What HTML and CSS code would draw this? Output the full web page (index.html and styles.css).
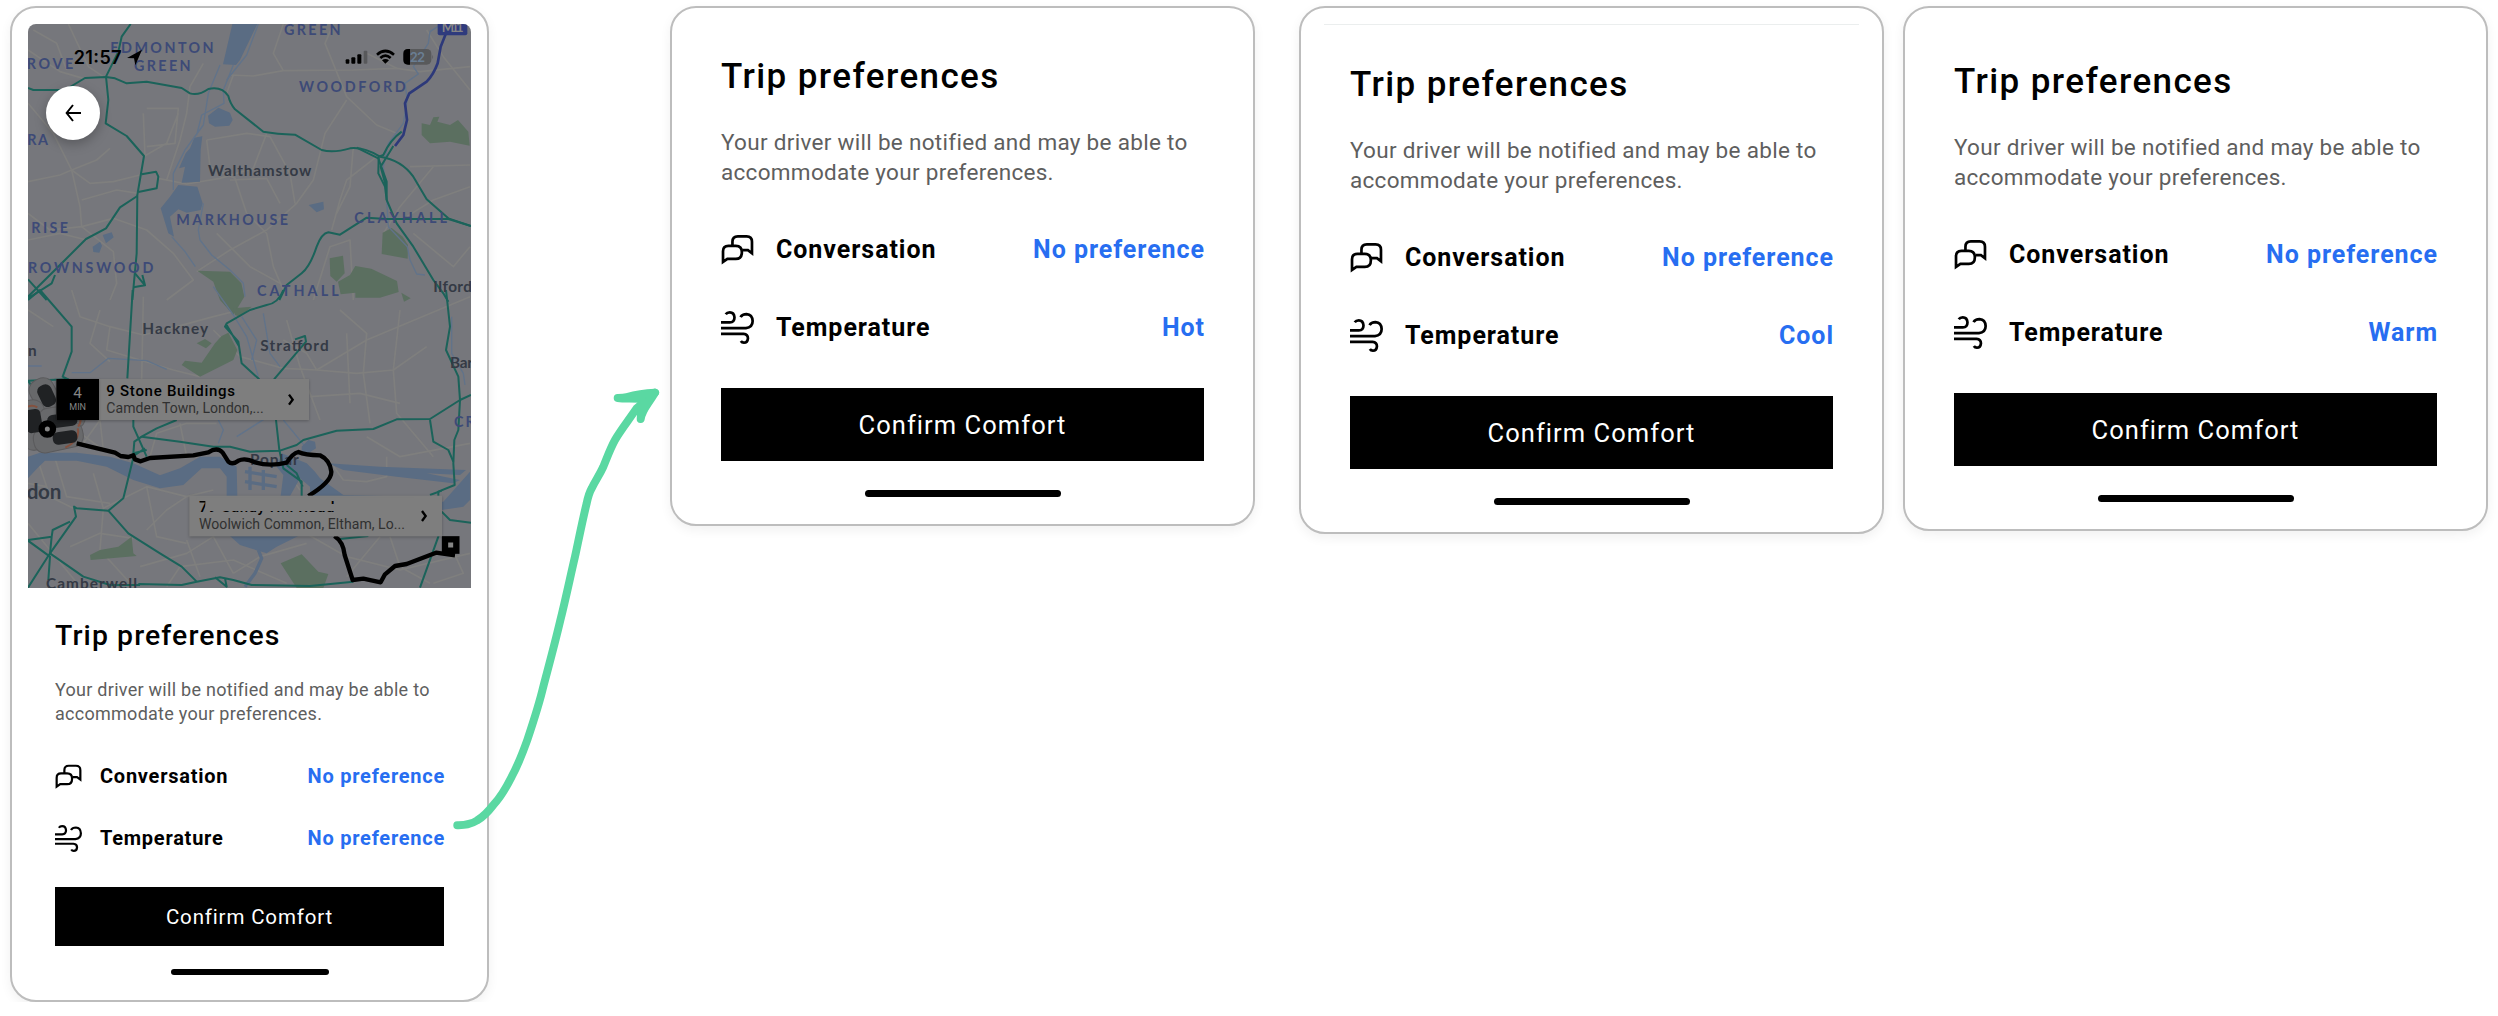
FILE: index.html
```html
<!DOCTYPE html>
<html lang="en">
<head>
  <meta charset="UTF-8">
  <meta name="viewport" content="width=device-width, initial-scale=1.0">
  <title>Trip preferences</title>
  <link rel="stylesheet" href="styles.css">
</head>
<body>
  <!-- shared icons -->
  <svg class="sprite">
    <symbol id="chat" viewBox="66 40 98 98">
      <path d="M72 126V94Q72 78 88 78H110Q128 78 128 97Q128 117 110 117H85Z"/>
      <path d="M100 77V66Q100 50 116 50H142Q158 50 158 66V100L146 91H130"/>
    </symbol>
    <symbol id="wind" viewBox="66 272 98 98">
      <path d="M66 306H92Q106 305 106 291Q105 276 92 276Q84 276 80 282"/>
      <path d="M66 323H140Q160 321 160 302Q159 282 142 281Q129 281 124 290"/>
      <path d="M66 340H133Q146 341 146 353Q145 366 134 366Q128 366 125 361"/>
    </symbol>
  </svg>

  <main>
    <section class="card phone">
      <div class="map">
        <svg viewBox="84 72 1329 1692" width="443" height="564">
          <rect class="land" x="84" y="72" width="1329" height="1692"/>

          <g class="roads">
            <path d="M84 150L180 215L250 235M100 90L170 130L200 210M205 72L265 200L310 230M84 310L160 400L215 510L240 620L245 680"/>
            <path d="M84 545L180 525L215 510L290 480L330 445M215 510L270 550L340 545L420 525M245 600L350 570L415 580"/>
            <path d="M610 190L570 260L560 340L540 420L500 540M440 325H535L525 430L440 440M430 470L500 430L535 340M700 225L680 280M430 340L435 470"/>
            <path d="M690 225L760 228L850 212L1060 210L1190 205L1260 215L1410 200M850 72L820 160L850 212M1000 72L975 130L1040 290L1130 375L1190 400"/>
            <path d="M1040 300L975 400L960 460L940 540L890 610L800 690M1280 90L1330 170L1410 270M1100 160L1190 205M620 420L740 400L810 410L870 520L885 610"/>
            <path d="M620 420L630 500L705 535L740 640M690 540L800 535L840 610M475 535L560 552L660 535L760 505L800 400M1130 470L1040 540L1020 600L995 690M1060 440L1050 560L1010 640"/>
            <path d="M84 640L150 690L245 680L340 655L440 690L520 760L580 840L500 900M245 680L340 755L350 850L330 900M84 720L180 700L260 720M740 640L800 700L820 800L850 870M800 690L690 750L590 815"/>
            <path d="M1230 500L1410 495M1300 500L1200 620L1150 700M1410 560L1300 600L1220 650M1240 700L1360 800L1410 740M940 900L990 740L1050 720L1060 900M650 700L750 800L840 850"/>
          </g>
          <g class="roads" transform="translate(0 870)">
            <path d="M215 0L240 80L330 110L430 135L530 110L640 80L720 60M300 60L270 160L330 215M430 20L425 270M84 60L160 110M330 110L320 180L420 210L520 240L600 260"/>
            <path d="M640 120L720 200L850 235L950 240L1100 150L1410 20M950 240L920 190L850 150M860 90L900 230L960 390M1020 60L1100 130L1090 250L1110 400M1200 60L1180 240L1190 370L1300 500"/>
            <path d="M950 240L1070 250L1180 240L1280 170M1040 130L1050 340M300 390L310 480L200 400M250 460L300 390L400 350M450 500L470 430L560 400L650 400M540 400L560 500L600 500M930 320L1080 310L1200 340"/>
            <path d="M110 500L150 620L220 655M165 505L200 620L330 640M280 550L310 655L440 590L560 620L640 600M310 655L300 780L400 890M440 590L470 740L560 760M440 720L500 660L560 620M210 770L300 730L400 745"/>
            <path d="M420 830L560 790L640 740L700 850M560 750L600 860M700 850L780 800L920 760M850 530L900 600M980 500L1030 570L1100 575L1160 560L1160 500M1100 440L1200 500L1410 460M900 720L1040 800L1200 840L1410 790"/>
            <path d="M1170 740L1200 830L1290 880M1040 860L1140 740M1340 740L1390 850L1300 880M84 580L140 590M84 700L150 780L240 890M500 890L540 830L700 810L860 880"/>
          </g>

          <g class="parks">
            <path d="M1265 370L1290 375L1300 352L1318 350L1312 365L1350 375L1374 360L1405 395L1409 437L1350 425L1290 430L1265 405Z"/>
            <path d="M1148 698L1175 684L1208 710L1224 735L1223 776L1145 762Z"/>
            <path d="M989 775L1029 767L1034 820L1010 845L991 828Z"/>
            <path d="M1014 845L1050 825L1066 798L1114 806L1191 843L1196 876L1140 893H1066V878L1022 883Z"/>
            <path d="M1204 878L1232 895L1212 905Z"/>
            <path d="M592 812L690 815L724 850L733 890L700 945L660 900L640 845Z"/>
            <path d="M700 925L755 920L720 950L705 945Z"/>
            <path d="M665 1008L685 998L712 1050L700 1080L600 1130L545 1095L555 1082L605 1088L645 1030Z"/>
            <path d="M590 1030L615 1017L635 1030L618 1045Z"/>
            <path d="M270 1665L300 1650L355 1640L395 1610L400 1660L410 1668L272 1680Z"/>
            <path d="M842 1690L905 1663L955 1715L985 1722L970 1764H890Z"/>
          </g>

          <g class="water">
            <path d="M697 72H772L720 180L708 195L669 193Z"/>
            <path d="M624 347L655 323L690 338L698 360L688 377L645 380L627 370Z"/>
            <path d="M583 413L607 409L602 450L600 545L545 548L555 500L537 505L557 460L570 445Z"/>
            <path d="M535 555L592 560L608 610L602 630L560 638L535 628L510 650L522 710L505 700L482 625L510 590Z"/>
            <path d="M926 615L970 605L972 628L950 637Z"/>
            <path d="M308 705L335 697L341 712L318 730ZM278 740L300 725L306 737L298 758L280 756Z"/>
          </g>
          <g class="streams">
            <path d="M660 195L625 280L610 375L555 450L520 520V570M700 195L670 270L672 310L605 345L590 405"/>
            <path d="M515 710L555 755L586 800M610 610L595 690L600 720L635 765L690 810L730 850L735 890M775 72L740 165L680 240"/>
            <path d="M1325 72L1290 95L1285 130L1240 200L1255 222L1215 250L1222 300L1210 370L1165 430L1150 500L1160 600L1165 680L1222 740L1230 780L1250 822L1275 825"/>
            <path d="M640 860L700 945L740 1010L775 1130M725 950L770 1020L755 1080M790 940L810 1060L840 1100M1355 950V1060L1390 1120L1395 1155M270 1118L325 1075L440 1082L500 1108"/>
            <path d="M215 1118L270 1118M84 1098H125M655 1260L670 1290L655 1330M820 1240L710 1310M850 1260L920 1345"/>
          </g>

          <!-- thames -->
          <g class="water" transform="translate(0 870)">
            <path d="M84 500L120 488L230 488L330 500L400 520L480 556L540 535L600 500L660 500L710 530L712 618H680V560L660 535H605L550 585L480 595L400 570L320 530L230 512H135L112 535L84 565Z"/>
            <path d="M842 618L850 555L830 530L845 490L920 520L945 545L960 565L1030 615L1150 618L1330 635L1410 545V630L1390 650L1325 660V618ZM870 618H930V590L900 565Z" fill-rule="evenodd"/>
            <path d="M985 520L1140 530L1398 540L1380 555L1280 550L1380 570L1360 580L1190 560L1030 540Z"/>
            <path d="M690 738H895L830 770L800 790L720 765Z"/>
            <path d="M905 470L925 450L945 455L948 475L925 490L905 488Z"/>
          </g>
          <g class="streams thick" transform="translate(0 870)">
            <path d="M735 545L830 560M735 575L830 590M750 530V600M790 540V600M775 780L785 805L765 850L735 890"/>
          </g>

          <g class="highways">
            <path d="M392 72L365 110L355 155L318 230L325 300L317 370L380 408L432 468L412 585L410 760L397 900"/>
            <path d="M84 264L100 270H195L255 234L318 231L345 235L380 250L440 245L545 264L570 280Q595 288 625 267Q665 258 685 288Q690 310 705 328L790 395Q830 402 885 404L965 450Q1000 460 1050 445Q1090 440 1140 470Q1205 480 1240 530L1280 598L1345 655L1413 678"/>
            <path d="M425 523L468 515L475 530L470 565L415 576M412 588L360 622L318 685L258 717L195 780L84 890M84 838L140 900M84 895L155 850L165 825"/>
            <path d="M1413 678L1345 657H1160L1100 653L1020 704L985 697Q965 700 950 740Q930 800 905 820L860 855L838 900"/>
            <path d="M1205 395Q1170 420 1150 465L1136 470L1135 520L1155 560L1160 600L1190 670L1240 740L1300 840L1330 880L1345 905"/>
            <path d="M1070 443L1135 475L1160 545V600M1180 438L1142 500L1158 560M405 820L435 856L400 862M427 825L435 856"/>
          </g>
          <g class="highways" transform="translate(0 870)">
            <path d="M398 0L382 265M84 30L120 0L215 110V185L188 260L205 268L84 272L100 295L140 275"/>
            <path d="M850 0Q835 40 800 45L750 60L680 100L675 110L715 155L725 220L778 268M680 105L718 170M822 268L918 155L915 138L885 148"/>
            <path d="M1338 0L1350 110L1338 180L1375 260L1380 330L1375 420L1363 450L1360 520L1364 585L1315 605V740L1260 893"/>
            <path d="M1413 315L1380 330L1290 387L1190 388L1120 417L1010 422L910 450L890 465L840 482L750 485L690 470L640 470L540 455L425 440L470 415L530 390"/>
            <path d="M828 390L838 480L850 535L905 575V618M860 525L890 550L908 590M1290 390L1300 455L1345 480L1360 515M400 390V410L440 500M425 440L403 455L400 490L440 480M405 495L435 475M402 495L370 625L325 662L230 655L222 650L228 680L150 790L84 893"/>
            <path d="M325 662L385 730L480 790L545 830L590 875L545 885L415 882M84 750L155 740L150 790L250 860L330 885H420M155 740L158 720L210 695M84 752L150 800L145 870M590 875L660 862L700 870L755 885L930 888L1060 875M645 862L680 890L675 865"/>
            <path d="M1325 665L1350 690L1413 698M1020 747L1105 738M1290 615L1325 602"/>
          </g>
          <path class="motorway" d="M1338 100L1322 140L1313 190Q1300 225 1280 245L1228 280L1215 310L1221 360L1210 405L1185 438"/>

          <g class="districts">
            <text x="852" y="104" textLength="170">GREEN</text>
            <text x="331" y="160" textLength="310">EDMONTON</text>
            <text x="402" y="213" textLength="170">GREEN</text>
            <text x="80" y="206" textLength="140">ROVE</text>
            <text x="897" y="277" textLength="320">WOODFORD</text>
            <text x="82" y="434" textLength="62">RA</text>
            <text x="94" y="699" textLength="110">RISE</text>
            <text x="529" y="676" textLength="335">MARKHOUSE</text>
            <text x="1063" y="668" textLength="278">CLAYHALL</text>
            <text x="84" y="820" textLength="376">ROWNSWOOD</text>
            <text x="771" y="887" textLength="245">CATHALL</text>
            <text x="1362" y="1281" textLength="62">CR</text>
          </g>
          <g class="towns">
            <text x="624" y="528" textLength="310">Walthamstow</text>
            <text x="1300" y="876" textLength="116">Ilford</text>
            <text x="427" y="1002" textLength="197">Hackney</text>
            <text x="781" y="1053" textLength="205">Stratford</text>
            <text x="84" y="1069">n</text>
            <text x="1350" y="1104" textLength="104">Barki</text>
            <text x="750" y="1396" textLength="146">Poplar</text>
            <text x="138" y="1767" textLength="273">Camberwell</text>
            <text class="city" x="80" y="1497" textLength="104">don</text>
          </g>

          <!-- cars waiting around the pickup point -->
          <g class="cars">
            <rect x="-70" y="-35" width="140" height="76" rx="32" transform="translate(145 1200) rotate(62)"/>
            <rect x="-75" y="-42" width="150" height="84" rx="34" transform="translate(100 1275) rotate(78)"/>
            <rect x="-70" y="-36" width="140" height="72" rx="30" transform="translate(185 1255) rotate(-8)"/>
            <rect x="-75" y="-38" width="150" height="76" rx="32" transform="translate(175 1312) rotate(-12)"/>
          </g>
          <path class="lights" d="M84 1220Q98 1214 112 1222M242 1252Q243 1270 234 1280M233 1285Q242 1320 196 1343"/>
          <g class="glass">
            <rect x="-34" y="-22" width="68" height="44" rx="18" transform="translate(140 1187) rotate(65)"/>
            <rect x="-42" y="-24" width="70" height="48" rx="14" transform="translate(102 1270) rotate(80)"/>
            <rect x="-38" y="-20" width="90" height="40" rx="16" transform="translate(180 1262) rotate(-7)"/>
            <rect x="-35" y="-18" width="74" height="38" rx="16" transform="translate(193 1312) rotate(-8)"/>
          </g>

          <path class="route" d="M230 1330L345 1358L362 1368L385 1371L400 1366L405 1378L422 1384L450 1374L580 1366L625 1357Q652 1340 668 1358L685 1385Q697 1396 715 1382Q735 1372 765 1387Q810 1400 860 1388Q878 1360 895 1356Q915 1365 960 1366Q990 1380 994 1415Q995 1445 925 1488M1003 1608Q1030 1625 1034 1665L1058 1740L1090 1736L1142 1747L1155 1723L1185 1698L1220 1692L1308 1658L1365 1666"/>
          <circle cx="142" cy="1287" r="17" class="pin"/>
          <rect x="1335" y="1618" width="34" height="34" class="pin square"/>

          <g class="tag">
            <rect x="169" y="1137" width="758" height="123"/>
            <rect class="eta" x="169" y="1137" width="128" height="123"/>
            <text class="mins" x="233" y="1195">4</text>
            <text class="unit" x="208" y="1230" textLength="50">MIN</text>
            <text class="place" x="319" y="1188" textLength="386">9 Stone Buildings</text>
            <text class="area" x="319" y="1239" textLength="472">Camden Town, London,...</text>
            <path d="M867 1184L878 1199L867 1214"/>
          </g>
          <g class="tag">
            <rect x="568" y="1487" width="758" height="122"/>
            <text class="place" x="597" y="1537" textLength="406">79 Sandy Hill Road</text>
            <path class="cover" d="M590 1492H1240V1503H590ZM616 1500H992V1512H1010V1533H616Z"/>
            <text class="area" x="597" y="1587" textLength="618">Woolwich Common, Eltham, Lo...</text>
            <path d="M1266 1533L1277 1548L1266 1563"/>
          </g>

          <g class="m11">
            <rect x="1313" y="58" width="89" height="48" rx="6"/>
            <text x="1325" y="97" textLength="66">M11</text>
          </g>

          <!-- status bar -->
          <text class="time" x="221" y="191" textLength="144">21:57</text>
          <path d="M426 149L381 174L402 175L406 196Z"/>
          <rect x="1037" y="178" width="11" height="13" rx="3"/>
          <rect x="1054" y="172" width="12" height="19" rx="3"/>
          <rect x="1072" y="163" width="12" height="28" rx="3"/>
          <rect x="1091" y="152" width="11" height="39" rx="3" class="off"/>
          <path class="wifi" d="M1131 164Q1156 142 1182 164M1141 174Q1156 160 1172 174"/>
          <path d="M1156 191L1146 181Q1156 173 1167 181Z"/>
          <rect x="1210" y="147" width="84" height="47" rx="14" class="off"/>
          <path d="M1230 147H1224Q1210 147 1210 161V180Q1210 194 1224 194H1230Z"/>
          <path d="M1297 164Q1302 171 1297 178Z" class="off"/>
          <text class="charge" x="1229" y="186" textLength="46">22</text>
        </svg>
        <button type="button" class="back">
          <svg viewBox="0 0 48 54" width="16" height="18"><path d="M48 27H4M24 3L5 27L24 51"/></svg>
        </button>
      </div>
      <div class="sheet">
        <h2>Trip preferences</h2>
        <p class="note">Your driver will be notified and may be able to<br>accommodate your preferences.</p>
        <div class="row">
          <svg class="icon"><use href="#chat"/></svg>
          <span class="label">Conversation</span>
          <span class="value">No preference</span>
        </div>
        <div class="row">
          <svg class="icon"><use href="#wind"/></svg>
          <span class="label">Temperature</span>
          <span class="value">No preference</span>
        </div>
        <button type="button" class="confirm">Confirm Comfort</button>
        <div class="home"></div>
      </div>
    </section>

    <section class="card large hot">
      <div class="sheet">
        <h2>Trip preferences</h2>
        <p class="note">Your driver will be notified and may be able to<br>accommodate your preferences.</p>
        <div class="row">
          <svg class="icon"><use href="#chat"/></svg>
          <span class="label">Conversation</span>
          <span class="value">No preference</span>
        </div>
        <div class="row">
          <svg class="icon"><use href="#wind"/></svg>
          <span class="label">Temperature</span>
          <span class="value">Hot</span>
        </div>
        <button type="button" class="confirm">Confirm Comfort</button>
        <div class="home"></div>
      </div>
    </section>

    <section class="card large cool">
      <div class="sheet">
        <h2>Trip preferences</h2>
        <p class="note">Your driver will be notified and may be able to<br>accommodate your preferences.</p>
        <div class="row">
          <svg class="icon"><use href="#chat"/></svg>
          <span class="label">Conversation</span>
          <span class="value">No preference</span>
        </div>
        <div class="row">
          <svg class="icon"><use href="#wind"/></svg>
          <span class="label">Temperature</span>
          <span class="value">Cool</span>
        </div>
        <button type="button" class="confirm">Confirm Comfort</button>
        <div class="home"></div>
      </div>
    </section>

    <section class="card large warm">
      <div class="sheet">
        <h2>Trip preferences</h2>
        <p class="note">Your driver will be notified and may be able to<br>accommodate your preferences.</p>
        <div class="row">
          <svg class="icon"><use href="#chat"/></svg>
          <span class="label">Conversation</span>
          <span class="value">No preference</span>
        </div>
        <div class="row">
          <svg class="icon"><use href="#wind"/></svg>
          <span class="label">Temperature</span>
          <span class="value">Warm</span>
        </div>
        <button type="button" class="confirm">Confirm Comfort</button>
        <div class="home"></div>
      </div>
    </section>

    <!-- arrow from the phone to the first result -->
    <svg class="arrow" viewBox="0 0 220 460" width="220" height="460">
      <path d="M7.300 445.300C14 445 20 445 27 440.500C33 437 38 432 43.300 425C50 418 56 408 61.700 396.700C68 385 73 372 77.300 360C83 343 89 325 93.300 306.700C99 285 105 263 110 241.700C116 218 120 198 125 176.700C129 158 133 138 136.700 123.300C138 117 139 113 141.700 108.300C145 101 149 96 153.300 86.700C157 78 160 69 165 60C170 51 178 41 186.700 28.300L205 12.700"/>
      <path class="head" d="M190.700 39C192 30 197 26 205 12.700C198 13 184 15 177 17C174 18 170 18 167.700 18C175 19 183 18 192 19Z"/>
    </svg>
  </main>
</body>
</html>
```

FILE: styles.css
```css
*{
  padding:0;
  margin:0;
  box-sizing: border-box;
}
body{
  background-color: white;
  font-family: Roboto, "Liberation Sans", sans-serif;
  overflow: hidden;
}
main{
  position: relative;
  display: flex;
  align-items: flex-start;
  padding: 6px 0 0 10px;
}
.sprite{
  display: none;
}
.card{
  flex: none;
  background-color: white;
  border: 2px solid #bdbdbd;
  border-radius: 26px;
  box-shadow: 0 4px 12px rgba(0,0,0,0.06);
}
.phone{
  width: 479px;
  height: 996px;
  padding: 16px;
}
.large{
  width: 585px;
}
.hot{
  height: 520px;
  padding: 47px 49px 0 49px;
  margin-left: 181px;
}
.cool{
  position: relative;
  height: 528px;
  padding: 55px 49px 0 49px;
  margin-left: 44px;
}
.cool::before{
  content: '';
  position: absolute;
  top: 16px;
  left: 23px;
  right: 23px;
  height: 1px;
  background-color: #ebeeee;
}
.warm{
  height: 525px;
  padding: 52px 49px 0 49px;
  margin-left: 19px;
}

/* map */
.map{
  position: relative;
  height: 564px;
  border-radius: 8px 8px 0 0;
  overflow: hidden;
}
.map svg{
  display: block;
}
.land{
  fill: #76777c;
}
.roads, .highways, .streams, .motorway, .route, .lights, .wifi{
  fill: none;
  stroke-linejoin: round;
}
.roads{
  stroke: #7f7f7e;
  stroke-width: 5;
}
.parks{
  fill: #5b6f60;
}
.water{
  fill: #5a6c83;
}
.streams{
  stroke: #61738a;
  stroke-width: 4;
}
.thick{
  stroke: #5a6c83;
  stroke-width: 10;
}
.highways{
  stroke: #1b635a;
  stroke-width: 6;
}
.motorway{
  stroke: #2d397a;
  stroke-width: 8;
}
.map text{
  font-family: Lato, "Open Sans", sans-serif;
}
.districts text{
  font-size: 43px;
  font-weight: 700;
  fill: #3d4a77;
}
.towns text{
  font-size: 46px;
  font-weight: 700;
  fill: #343a45;
}
.towns .city{
  font-size: 62px;
}
.cars{
  fill: #68696b;
  stroke: #5a5a5c;
  stroke-width: 3;
}
.glass{
  fill: #202224;
}
.lights{
  stroke: #84513f;
  stroke-width: 6;
}
.route{
  stroke: black;
  stroke-width: 13;
}
.pin{
  fill: #858585;
  stroke: black;
  stroke-width: 19;
}
.tag rect{
  fill: #7e7e7e;
  filter: drop-shadow(0 3px 5px rgba(0,0,0,0.25));
}
.tag .eta{
  fill: black;
}
.tag path{
  fill: none;
  stroke: black;
  stroke-width: 7;
}
.tag .cover{
  fill: #7e7e7e;
  stroke: none;
}
.map .tag text{
  font-family: Roboto, sans-serif;
}
.mins, .unit{
  fill: #858585;
}
.mins{
  font-size: 46px;
  text-anchor: middle;
}
.unit{
  font-size: 27px;
}
.place{
  font-size: 45px;
  font-weight: 500;
}
.area{
  font-size: 42px;
  fill: #303030;
}
.m11 rect{
  fill: #2f3b7d;
}
.m11 text{
  font-size: 39px;
  font-weight: 700;
  fill: #858585;
}
.map .time, .map .charge{
  font-family: Inter, sans-serif;
  font-size: 54px;
  font-weight: 600;
}
.map .charge{
  font-size: 39px;
  fill: #6a7e93;
}
.off{
  fill: #4f4f50;
  fill-opacity: 0.75;
}
.wifi{
  stroke: black;
  stroke-width: 8;
}
.back{
  position: absolute;
  top: 62px;
  left: 18px;
  width: 54px;
  height: 54px;
  display: flex;
  align-items: center;
  justify-content: center;
  border: none;
  border-radius: 50%;
  background-color: white;
  box-shadow: 0 4px 12px rgba(0,0,0,0.25);
}
.back svg{
  flex: none;
  fill: none;
  stroke: black;
  stroke-width: 6;
}

/* preferences sheet */
.phone .sheet{
  padding: 30px 27px 0 27px;
}
h2{
  font-size: 28.4px;
  line-height: 36px;
  font-weight: 500;
  letter-spacing: 1.1px;
  white-space: nowrap;
}
.note{
  margin: 24px 0 35px 0;
  font-size: 18px;
  line-height: 24px;
  letter-spacing: 0.27px;
  color: #5e5e5e;
  white-space: nowrap;
}
.row{
  display: flex;
  align-items: center;
  height: 30px;
  margin-bottom: 32px;
  font-size: 20px;
  font-weight: 700;
  letter-spacing: 0.75px;
}
.icon{
  width: 27px;
  height: 27px;
  margin-right: 18px;
  fill: none;
  stroke: black;
  stroke-width: 8;
}
.value{
  margin-left: auto;
  margin-right: -1px;
  color: #276ef1;
}
.confirm{
  display: block;
  width: 100%;
  height: 59px;
  margin-top: 34px;
  border: none;
  background-color: black;
  color: white;
  font-family: inherit;
  font-size: 20.5px;
  font-weight: 400;
  letter-spacing: 0.85px;
}
.home{
  width: 158px;
  height: 6px;
  margin: 23px auto 0 auto;
  border-radius: 3px;
  background-color: black;
}
.large h2{
  font-size: 35px;
  line-height: 44px;
  letter-spacing: 1.4px;
}
.large .note{
  margin: 28px 0 44px 0;
  font-size: 22.5px;
  line-height: 30px;
  letter-spacing: 0.3px;
}
.large .row{
  height: 36px;
  margin-bottom: 42px;
  font-size: 25px;
  letter-spacing: 0.95px;
}
.large .icon{
  width: 33px;
  height: 33px;
  margin-right: 22px;
}
.large .confirm{
  height: 73px;
  margin-top: 43px;
  font-size: 25.5px;
  letter-spacing: 1.05px;
}
.large .home{
  width: 196px;
  height: 7px;
  margin-top: 29px;
  border-radius: 4px;
}

.arrow{
  position: absolute;
  top: 380px;
  left: 450px;
  fill: none;
  stroke: #5ad8a2;
  stroke-width: 8;
  stroke-linecap: round;
  stroke-linejoin: round;
}
.arrow .head{
  fill: #5ad8a2;
}
```
